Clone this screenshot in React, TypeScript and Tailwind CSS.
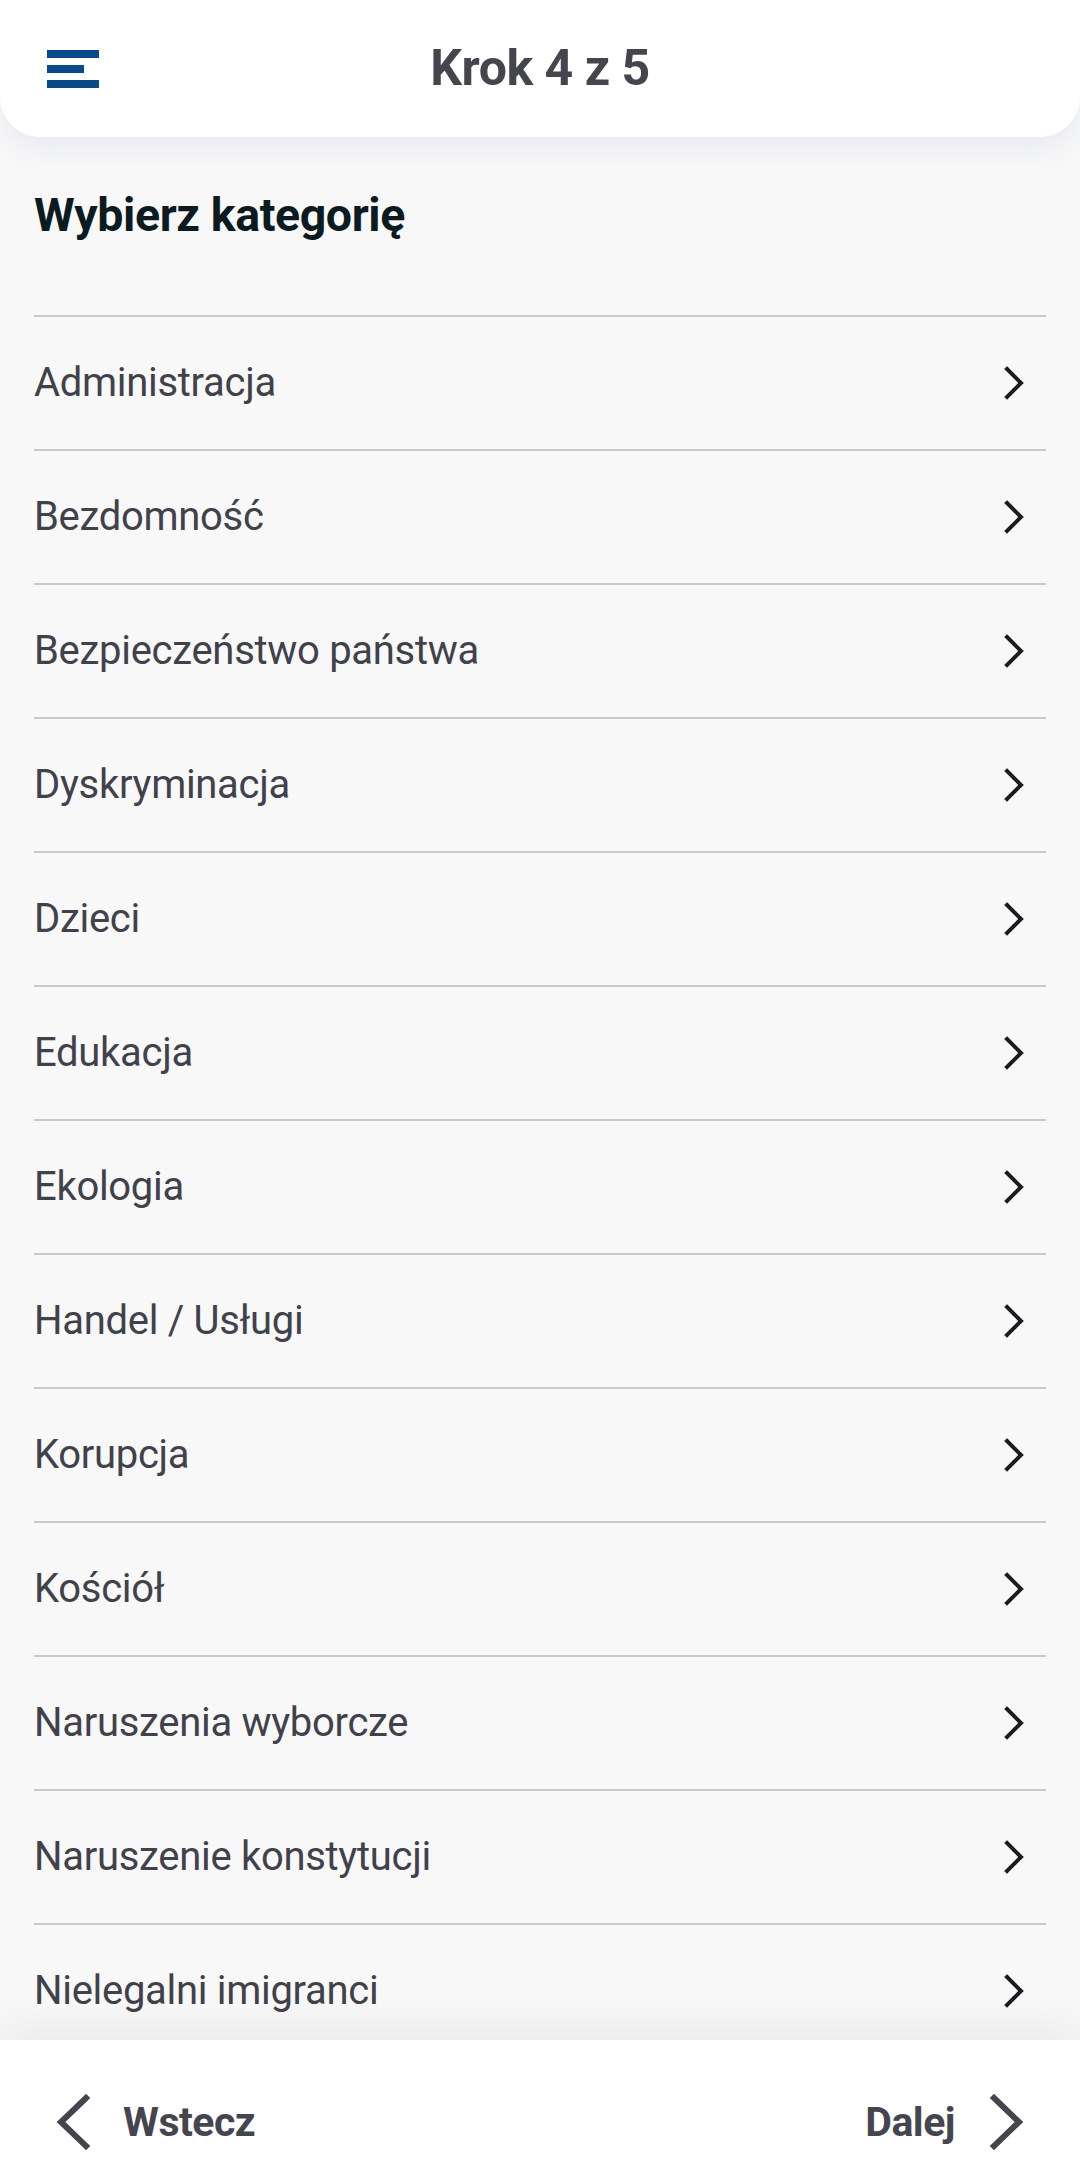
import React from "react";

const items = [
  "Administracja",
  "Bezdomność",
  "Bezpieczeństwo państwa",
  "Dyskryminacja",
  "Dzieci",
  "Edukacja",
  "Ekologia",
  "Handel / Usługi",
  "Korupcja",
  "Kościół",
  "Naruszenia wyborcze",
  "Naruszenie konstytucji",
  "Nielegalni imigranci",
];

const font = { fontFamily: "Roboto, 'Noto Sans', sans-serif" };

function RowChevron() {
  return (
    <svg width="24" height="34" viewBox="0 0 24 34" className="shrink-0">
      <path d="M5 3 L19 17 L5 31" fill="none" stroke="#1c1c1f" strokeWidth="4" strokeLinecap="square" strokeLinejoin="miter" />
    </svg>
  );
}

function BigChevron({ dir }: { dir: "left" | "right" }) {
  const d = dir === "left" ? "M31 4 L6 28 L31 52" : "M5 4 L30 28 L5 52";
  return (
    <svg width="36" height="56" viewBox="0 0 36 56" className="shrink-0">
      <path d={d} fill="none" stroke="#45454f" strokeWidth="6" strokeLinecap="square" strokeLinejoin="miter" />
    </svg>
  );
}

export default function App() {
  return (
    <div className="w-[1080px] h-[2176px] bg-[#f8f8f9] flex flex-col overflow-hidden relative" style={font}>
      <header className="relative z-10 h-[137px] shrink-0 bg-white rounded-b-[40px] shadow-[0_10px_30px_rgba(40,70,120,0.08)] flex items-center px-[47px]">
        <button className="flex flex-col gap-[7px] w-[52px]">
          <span className="block h-[8px] w-[52px] bg-[#0a4a8a]" />
          <span className="block h-[8px] w-[37px] bg-[#0a4a8a]" />
          <span className="block h-[8px] w-[52px] bg-[#0a4a8a]" />
        </button>
        <h1 className="absolute left-0 right-0 text-center text-[50px] leading-[60px] font-bold text-[#45454f] top-[38px] tracking-[-0.5px] pointer-events-none">
          Krok 4 z 5
        </h1>
      </header>

      <main className="flex-1 overflow-hidden px-[34px]">
        <h2 className="pt-[52px] text-[46.5px] leading-[52px] font-bold text-[#0b1b1f] tracking-[-0.4px]">
          Wybierz kategorię
        </h2>
        <ul className="mt-[74px]">
          {items.map((it) => (
            <li
              key={it}
              className="h-[134px] border-t-2 border-[#cacace] flex items-center justify-between pr-[20px]"
            >
              <span className="text-[40px] leading-[48px] text-[#41414b] tracking-[-0.3px]">{it}</span>
              <RowChevron />
            </li>
          ))}
        </ul>
      </main>

      <footer className="absolute left-0 right-0 bottom-0 h-[136px] bg-white shadow-[0_-14px_40px_rgba(0,0,0,0.06)] flex items-center justify-between px-[55px] pt-[28px]">
        <button className="flex items-center gap-[32px]">
          <BigChevron dir="left" />
          <span className="text-[41px] leading-[48px] font-bold text-[#45454f] tracking-[-0.5px]">Wstecz</span>
        </button>
        <button className="flex items-center gap-[34px]">
          <span className="text-[41px] leading-[48px] font-bold text-[#45454f] tracking-[-0.5px]">Dalej</span>
          <BigChevron dir="right" />
        </button>
      </footer>
    </div>
  );
}
